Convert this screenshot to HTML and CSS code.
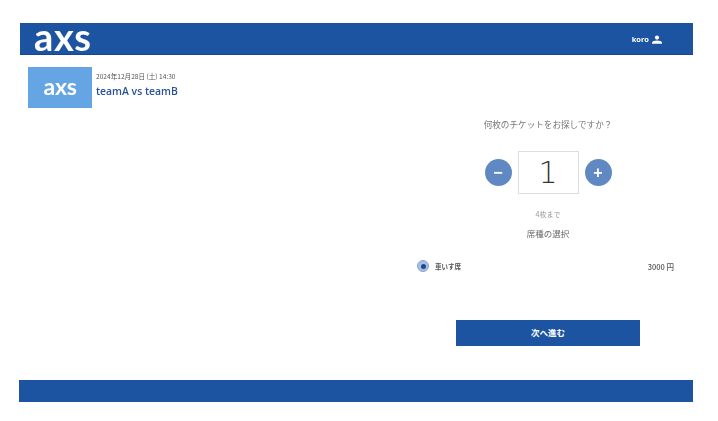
FILE: index.html
```html
<!DOCTYPE html>
<html lang="ja">
<head>
  <meta charset="UTF-8" />
  <meta name="viewport" content="width=device-width, initial-scale=1.0" />
  <title>axs チケット選択</title>
  <link rel="stylesheet" href="styles.css">
</head>
<body>
  <div class="page">
    <header class="site-header">
      <span class="logo">axs</span>
      <div class="user">
        <span class="user-name">koro</span>
        <svg class="user-icon" viewBox="0 0 12 10" aria-hidden="true">
          <circle cx="6" cy="2.7" r="2.5" />
          <path d="M0 10V8.6C0 7 3 6.2 6 6.2s6 .8 6 2.4V10z" />
        </svg>
      </div>
    </header>

    <div class="event">
      <div class="event-thumb">axs</div>
      <div class="event-info">
        <div class="event-date">2024年12月28日 (土) 14:30</div>
        <div class="event-name">teamA vs teamB</div>
      </div>
    </div>

    <main class="order">
      <p class="order-question">何枚のチケットをお探しですか？</p>
      <div class="stepper">
        <button class="step-btn">−</button>
        <div class="step-value">1</div>
        <button class="step-btn">+</button>
      </div>
      <p class="order-limit">4枚まで</p>
      <p class="order-seat-title">席種の選択</p>
      <label class="seat-row">
        <span class="radio"><span class="radio-dot"></span></span>
        <span class="seat-name">車いす席</span>
        <span class="seat-price">3000 円</span>
      </label>
      <button class="next-btn">次へ進む</button>
    </main>

    <footer class="site-footer"></footer>
  </div>
</body>
</html>
```

FILE: styles.css
```css
* {
  box-sizing: border-box;
  margin: 0;
  padding: 0;
}
body {
  background: #fff;
  font-family: "Noto Sans CJK JP", "Noto Sans", sans-serif;
  color: #555;
}
.page {
  width: 718px;
  height: 421px;
  padding: 23px 25px 0 19px;
  overflow: hidden;
}
.site-header {
  display: flex;
  justify-content: space-between;
  align-items: center;
  height: 32px;
  margin-left: 1px;
  padding: 0 31px 0 14px;
  background: #1c54a1;
  border-bottom: 1px solid #17478a;
}
.logo {
  font-family: "Lato", sans-serif;
  font-size: 38px;
  font-weight: 700;
  letter-spacing: 0.6px;
  line-height: 28px;
  color: #fff;
  margin-top: -6px;
  filter: blur(0.6px);
}
.user {
  display: flex;
  align-items: center;
  gap: 3px;
  color: #fff;
  filter: blur(0.5px);
}
.user-name {
  font-family: "Open Sans", sans-serif;
  font-size: 7.5px;
  font-weight: 700;
}
.user-icon {
  width: 10px;
  height: 9px;
  margin-top: 1px;
  fill: #fff;
}
.event {
  display: flex;
  align-items: flex-start;
  gap: 4px;
  margin: 12px 0 0 9px;
}
.event-thumb {
  width: 64px;
  height: 41px;
  background: #65a5e3;
  color: #fff;
  font-family: "Lato", sans-serif;
  font-size: 23px;
  font-weight: 700;
  letter-spacing: -0.3px;
  line-height: 38px;
  text-align: center;
  filter: blur(0.3px);
}
.event-info {
  padding-top: 4px;
}
.event-date {
  font-size: 6.6px;
  line-height: 11px;
  color: #555;
  filter: blur(0.2px);
}
.event-name {
  font-family: "Open Sans", sans-serif;
  font-size: 10.4px;
  font-weight: 600;
  line-height: 16px;
  margin-top: 1px;
  color: #2a5299;
  filter: blur(0.2px);
}
.order {
  display: flex;
  flex-direction: column;
  align-items: center;
  width: 266px;
  margin: 10px 0 0 396px;
}
.order-question {
  font-size: 8.6px;
  line-height: 12px;
  color: #777;
  filter: blur(0.5px);
}
.stepper {
  display: flex;
  align-items: center;
  gap: 6px;
  margin-top: 21px;
}
.step-btn {
  width: 27px;
  height: 27px;
  border: none;
  border-radius: 50%;
  background: #6089c4;
  color: #fff;
  font-family: "Liberation Sans", sans-serif;
  font-size: 16px;
  font-weight: 700;
  line-height: 27px;
  filter: blur(0.3px);
}
.step-value {
  width: 61px;
  height: 43px;
  border: 1px solid #ddd;
  font-family: "DejaVu Sans Light", "DejaVu Sans", sans-serif;
  font-size: 30px;
  font-weight: 200;
  line-height: 41px;
  text-align: center;
  color: #333;
}
.order-limit {
  margin-top: 16px;
  font-size: 7px;
  line-height: 9px;
  color: #999;
  filter: blur(0.5px);
}
.order-seat-title {
  margin-top: 8px;
  font-size: 8.5px;
  line-height: 12px;
  color: #666;
  filter: blur(0.4px);
}
.seat-row {
  display: flex;
  align-items: center;
  align-self: stretch;
  gap: 6px;
  margin-top: 21px;
  padding: 0 7px 0 2px;
}
.radio {
  display: flex;
  justify-content: center;
  align-items: center;
  width: 12px;
  height: 12px;
  border-radius: 50%;
  background: #a9bfe0;
  border: 1px solid #8aa6d2;
}
.radio-dot {
  width: 5px;
  height: 5px;
  border-radius: 50%;
  background: #1c4a94;
}
.seat-name {
  font-size: 6.5px;
  font-weight: 700;
  color: #555;
  filter: blur(0.4px);
}
.seat-price {
  margin-left: auto;
  font-size: 7.5px;
  font-weight: 500;
  color: #555;
  filter: blur(0.4px);
}
.next-btn {
  width: 184px;
  height: 26px;
  margin-top: 48px;
  padding-bottom: 3px;
  border: none;
  background: #1c54a1;
  color: #fff;
  font-family: inherit;
  font-size: 8.5px;
  font-weight: 700;
}
.site-footer {
  height: 22px;
  margin-top: 34px;
  background: #1c54a1;
}
```
